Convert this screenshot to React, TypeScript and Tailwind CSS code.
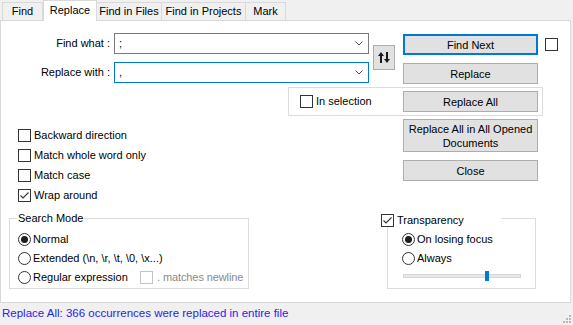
import React from "react";

const Check = ({ checked = false, disabled = false }: { checked?: boolean; disabled?: boolean }) => (
  <span
    className={`flex w-[13px] h-[13px] shrink-0 items-center justify-center border bg-white ${
      disabled ? "border-[#c4c4c4]" : "border-[#333333]"
    }`}
  >
    {checked && (
      <svg width="11" height="11" viewBox="0 0 11 11">
        <polyline points="1.5,5.5 4,8 9.5,2.5" fill="none" stroke="#333333" strokeWidth="1.1" />
      </svg>
    )}
  </span>
);

const Radio = ({ on = false }: { on?: boolean }) => (
  <span className="flex w-[13px] h-[13px] shrink-0 items-center justify-center rounded-full border border-[#333333] bg-white">
    {on && <span className="w-[7px] h-[7px] rounded-full bg-[#1f1f1f]" />}
  </span>
);

const Btn = ({ label, focus = false, tall = false }: { label: React.ReactNode; focus?: boolean; tall?: boolean }) => (
  <div
    className={`flex w-[135px] items-center justify-center bg-[#e1e1e1] text-center leading-[14px] ${
      tall ? "h-[33px]" : "h-[21px]"
    } ${focus ? "border-2 border-[#0078d7]" : "border border-[#adadad]"}`}
  >
    {label}
  </div>
);

const Combo = ({ value, active = false }: { value: string; active?: boolean }) => (
  <div
    className={`flex h-[21px] w-[255px] items-center justify-between border bg-white pl-[4px] pr-[5px] ${
      active ? "border-[#0078d7]" : "border-[#7a7a7a]"
    }`}
  >
    <span>{value}</span>
    <svg width="8" height="5" viewBox="0 0 8 5">
      <polyline points="0.5,0.5 4,4 7.5,0.5" fill="none" stroke="#4d4d4d" strokeWidth="1" />
    </svg>
  </div>
);

const CheckRow = ({ label, checked = false }: { label: string; checked?: boolean }) => (
  <div className="flex h-[20px] items-start gap-[3px]">
    <Check checked={checked} />
    <span className="leading-[13px]">{label}</span>
  </div>
);

const RadioRow = ({ label, on = false, children }: { label: string; on?: boolean; children?: React.ReactNode }) => (
  <div className="flex h-[19px] items-center gap-[2px]">
    <Radio on={on} />
    <span className={children ? "w-[105px] shrink-0" : ""}>{label}</span>
    {children}
  </div>
);

const tabs = [
  { name: "Find", w: "w-[41px]" },
  { name: "Replace", w: "w-[54px]", active: true },
  { name: "Find in Files", w: "w-[65px]" },
  { name: "Find in Projects", w: "w-[84px]" },
  { name: "Mark", w: "w-[40px]" },
];

export default function App() {
  return (
    <div className="w-[573px] h-[325px] overflow-hidden bg-[#f0f0f0] text-[11px] text-black font-['Liberation_Sans',Arial,sans-serif]">
      {/* tab strip */}
      <div className="flex h-[20px] items-end pl-[2px]">
        {tabs.map((t) =>
          t.active ? (
            <div
              key={t.name}
              className={`relative z-10 -mb-px flex h-[21px] items-center justify-center border border-b-0 border-[#d9d9d9] bg-white pb-[2px] ${t.w}`}
            >
              {t.name}
            </div>
          ) : (
            <div
              key={t.name}
              className={`flex h-[18px] items-center justify-center border border-b-0 border-[#d9d9d9] bg-[#f0f0f0] ${t.w} ${
                t.name === "Find" ? "" : "border-l-0"
              }`}
            >
              {t.name}
            </div>
          )
        )}
      </div>

      {/* tab panel */}
      <div className="h-[283px] w-[571px] border border-[#d9d9d9] bg-white">
        {/* find / replace fields */}
        <div className="flex items-start pt-[12px]">
          <div className="flex flex-col gap-[8px]">
            <div className="flex items-center">
              <span className="w-[110px] pr-[1px] text-right">Find what :</span>
              <span className="ml-[3px]">
                <Combo value=";" />
              </span>
            </div>
            <div className="flex items-center">
              <span className="w-[110px] pr-[1px] text-right">Replace with :</span>
              <span className="ml-[3px]">
                <Combo value="," active />
              </span>
            </div>
          </div>
          <div className="ml-[4px] mt-[12px] flex h-[25px] w-[22px] items-center justify-center border border-[#adadad] bg-[#e1e1e1]">
            <svg width="12" height="11" viewBox="0 0 12 11">
              <line x1="3" y1="3" x2="3" y2="11" stroke="#1a1a1a" strokeWidth="2" />
              <polygon points="0,4 3,0 6,4" fill="#1a1a1a" />
              <line x1="9" y1="0" x2="9" y2="8" stroke="#1a1a1a" strokeWidth="2" />
              <polygon points="6,7 9,11 12,7" fill="#1a1a1a" />
            </svg>
          </div>
          <div className="ml-[8px] mt-[1px] flex flex-col gap-[8px]">
            <div className="flex items-start">
              <Btn label="Find Next" focus />
              <span className="ml-[7px] mt-[4px]">
                <Check />
              </span>
            </div>
            <Btn label="Replace" />
          </div>
        </div>

        {/* in selection */}
        <div className="ml-[287px] mt-[3px] flex h-[29px] w-[255px] items-center border border-[#dcdcdc] pl-[11px] pr-[4px]">
          <Check />
          <span className="ml-[3px]">In selection</span>
          <span className="ml-auto">
            <Btn label="Replace All" />
          </span>
        </div>

        {/* options + more buttons */}
        <div className="mt-[3px] flex">
          <div className="flex w-[402px] flex-col pl-[17px] pt-[10px]">
            <CheckRow label="Backward direction" />
            <CheckRow label="Match whole word only" />
            <CheckRow label="Match case" />
            <CheckRow label="Wrap around" checked />
          </div>
          <div className="flex flex-col gap-[8px]">
            <Btn label={<>Replace All in All Opened<br />Documents</>} tall />
            <Btn label="Close" />
          </div>
        </div>

        {/* group boxes */}
        <div className="mt-[9px] flex">
          <div className="relative ml-[8px] h-[71px] w-[240px] border border-[#dcdcdc] pl-[8px] pt-[11px]">
            <span className="absolute -top-[8px] left-[7px] bg-white px-[1px] leading-[14px]">Search Mode</span>
            <RadioRow label="Normal" on />
            <RadioRow label="Extended (\n, \r, \t, \0, \x...)" />
            <RadioRow label="Regular expression">
              <Check disabled />
              <span className="ml-[2px] whitespace-nowrap tracking-[-0.1px] text-[#8a8a8a]">. matches newline</span>
            </RadioRow>
          </div>
          <div className="relative ml-[138px] h-[71px] w-[149px] border border-[#dcdcdc] pl-[14px] pt-[11px]">
            <div className="absolute -top-[6px] -left-[7px] flex h-[14px] w-[120px] items-center gap-[3px] bg-white">
              <Check checked />
              <span>Transparency</span>
            </div>
            <RadioRow label="On losing focus" on />
            <RadioRow label="Always" />
            <div className="relative ml-[1px] mt-[3px] flex h-[10px] w-[118px] items-center">
              <div className="h-[4px] w-full border border-[#d6d6d6] bg-[#e7e7e7]" />
              <div className="absolute left-[82px] top-0 h-[10px] w-[4px] bg-[#0078d7]" />
            </div>
          </div>
        </div>
      </div>

      {/* status bar */}
      <div className="flex h-[22px] items-center justify-between pl-[2px]">
        <span className="text-[11.5px] text-[#2a22f2]">Replace All: 366 occurrences were replaced in entire file</span>
        <svg width="8" height="8" viewBox="0 0 8 8" className="mr-[2px] self-end mb-[2px]">
          <rect x="6" y="0" width="2" height="2" fill="#b8b8b8" />
          <rect x="3" y="3" width="2" height="2" fill="#b8b8b8" />
          <rect x="6" y="3" width="2" height="2" fill="#b8b8b8" />
          <rect x="0" y="6" width="2" height="2" fill="#b8b8b8" />
          <rect x="3" y="6" width="2" height="2" fill="#b8b8b8" />
          <rect x="6" y="6" width="2" height="2" fill="#b8b8b8" />
        </svg>
      </div>
    </div>
  );
}
